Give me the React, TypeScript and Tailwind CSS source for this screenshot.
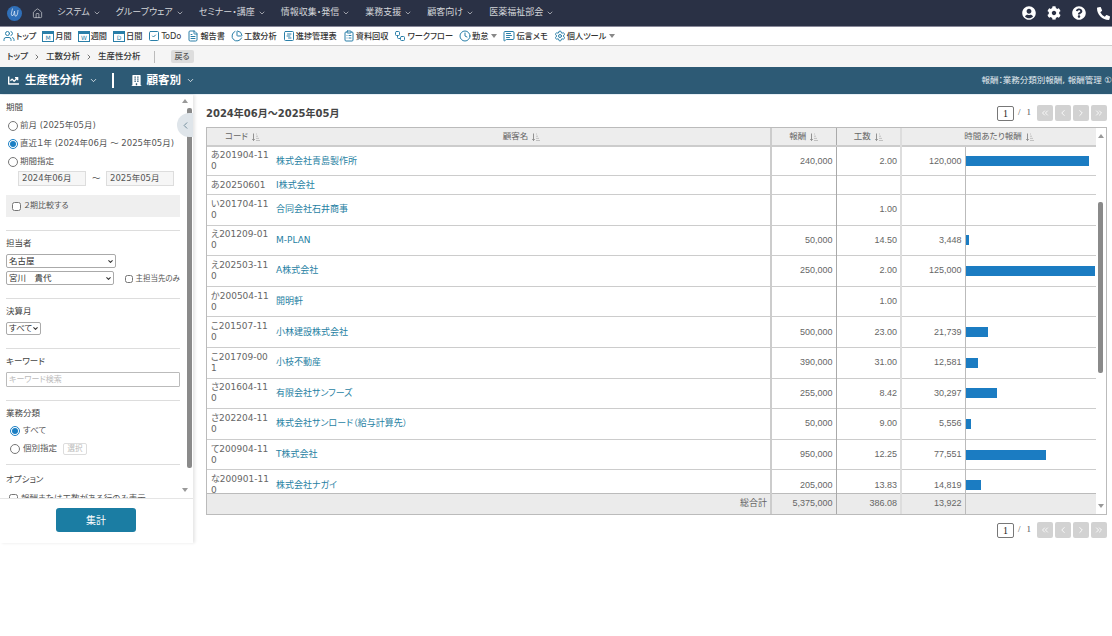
import {
  ChartPie,
  ChevronDown,
  ChevronLeft,
  ChevronRight,
  ChevronsLeft,
  ChevronsRight,
  ClipboardList,
  Clock,
  FileText,
  House,
  MessageSquareText,
  Settings,
  SquareChartGantt,
  SquareCheck,
  Users,
  Workflow,
} from "lucide-react";
import { FaBuilding, FaChartLine, FaCog, FaPhoneAlt, FaQuestionCircle, FaUserCircle } from "react-icons/fa";

const navItems = ["システム", "グループウェア", "セミナー・講座", "情報収集・発信", "業務支援", "顧客向け", "医薬福祉部会"];

const rows = [
  { code: "あ201904-110", name: "株式会社青島製作所", fee: "240,000", hours: "2.00", rate: 120000, h: "h-[28.5px]" },
  { code: "あ20250601", name: "I株式会社", fee: "", hours: "", rate: 0, h: "h-[19px]" },
  { code: "い201704-110", name: "合同会社石井商事", fee: "", hours: "1.00", rate: 0, h: "h-[30.6px]" },
  { code: "え201209-010", name: "M-PLAN", fee: "50,000", hours: "14.50", rate: 3448, h: "h-[30.6px]" },
  { code: "え202503-110", name: "A株式会社", fee: "250,000", hours: "2.00", rate: 125000, h: "h-[30.6px]" },
  { code: "か200504-110", name: "開明軒", fee: "", hours: "1.00", rate: 0, h: "h-[30.6px]" },
  { code: "こ201507-110", name: "小林建設株式会社", fee: "500,000", hours: "23.00", rate: 21739, h: "h-[30.6px]" },
  { code: "こ201709-001", name: "小枝不動産", fee: "390,000", hours: "31.00", rate: 12581, h: "h-[30.6px]" },
  { code: "さ201604-110", name: "有限会社サンフーズ", fee: "255,000", hours: "8.42", rate: 30297, h: "h-[30.6px]" },
  { code: "さ202204-110", name: "株式会社サンロード（給与計算先）", fee: "50,000", hours: "9.00", rate: 5556, h: "h-[30.6px]" },
  { code: "て200904-110", name: "T株式会社", fee: "950,000", hours: "12.25", rate: 77551, h: "h-[30.6px]" },
  { code: "な200901-110", name: "株式会社ナガイ", fee: "205,000", hours: "13.83", rate: 14819, h: "h-[30.6px]" },
];

const Logo = () => (
  <svg width="15" height="15" viewBox="0 0 15 15">
    <circle cx="7.5" cy="7.5" r="7.5" fill="#2f6fb8" />
    <path d="M5.5 2.5 L4.2 8 Q4.5 11 6.5 9 L7.5 5 L8 10 Q9.5 11 10.5 8 L11 4" fill="none" stroke="#e8f0fa" strokeWidth="0.7" />
  </svg>
);

const CalIcon = ({ letter }: { letter: string }) => (
  <svg width="12" height="12" viewBox="0 0 12 12" className="shrink-0">
    <rect x="0.5" y="1.5" width="11" height="10" fill="none" stroke="#2a7fa8" strokeWidth="1" />
    <rect x="0.5" y="1.5" width="11" height="2.5" fill="#2a7fa8" />
    <text x="6" y="10.2" fontSize="6" textAnchor="middle" fill="#2a7fa8">{letter}</text>
  </svg>
);

const Caret = () => <span className="ml-[2px] border-x-[3px] border-t-[4px] border-x-transparent border-t-[#888]" />;

const SortIcon = () => (
  <svg width="8" height="8" viewBox="0 0 8 8" className="ml-1 inline-block shrink-0">
    <path d="M1.5 0.5 V7.5 M0.3 6 L1.5 7.5 L2.7 6" fill="none" stroke="#888" strokeWidth="0.9" />
    <path d="M4 1 H5 M4 3.2 H6 M4 5.4 H7 M4 7.5 H8" fill="none" stroke="#bbb" strokeWidth="0.9" />
  </svg>
);

const ToolItem = ({ icon, label, caret }: { icon: React.ReactNode; label: string; caret?: boolean }) => (
  <div className="flex items-center gap-[1px] whitespace-nowrap">
    {icon}
    <span>{label}</span>
    {caret && <Caret />}
  </div>
);

const Pager = () => {
  const btn = "flex h-[16px] w-[16px] items-center justify-center rounded-[2px] bg-[#d2d2d2] text-white";
  return (
    <div className="flex items-center text-[9px] text-[#555] [font-family:'Liberation_Serif',serif]">
      <div className="flex h-[15px] w-[17px] items-center justify-center rounded-[2px] border border-[#777] bg-white text-[10px] text-[#222]">1</div>
      <span className="ml-[4px]">/</span>
      <span className="ml-[6px] mr-[6px]">1</span>
      <div className="flex gap-[2px]">
        <div className={btn}><ChevronsLeft size={10} /></div>
        <div className={btn}><ChevronLeft size={10} /></div>
        <div className={btn}><ChevronRight size={10} /></div>
        <div className={btn}><ChevronsRight size={10} /></div>
      </div>
    </div>
  );
};

const Cols = () => (
  <colgroup>
    <col className="w-[66px]" />
    <col />
    <col className="w-[65px]" />
    <col className="w-[65px]" />
    <col className="w-[64px]" />
    <col className="w-[131px]" />
  </colgroup>
);

const Hr = ({ top = "mt-[13px]" }: { top?: string }) => <div className={`mb-[6px] h-px bg-[#ddd] ${top}`} />;

const Label = ({ children }: { children: React.ReactNode }) => (
  <div className="mb-[5px] text-[8.5px] leading-[12px] text-[#444]">{children}</div>
);

const FakeSelect = ({ value, className }: { value: string; className: string }) => (
  <div className={`flex items-center justify-between rounded-[2px] border border-[#aaa] bg-white pl-[2px] pr-[1px] text-[8.5px] text-[#333] ${className}`}>
    <span className="whitespace-nowrap">{value}</span>
    <ChevronDown size={7} strokeWidth={3.5} className="shrink-0" />
  </div>
);

export default function App() {
  return (
    <div className="min-h-[636px] bg-white text-[9px] text-[#555] [font-family:'DejaVu_Sans','Noto_Sans_CJK_JP',sans-serif] [font-feature-settings:'palt']">
      {/* Top nav */}
      <nav className="flex h-[26px] items-center bg-[#2a3145] pl-[7px] pr-[2px] text-[#d4d6da]">
        <Logo />
        <House size={11} className="ml-[10px] mr-[14px]" strokeWidth={1.5} />
        <div className="flex items-center gap-[15px]">
          {navItems.map((item) => (
            <div key={item} className="flex items-center gap-[3px] whitespace-nowrap">
              {item}
              <ChevronDown size={8} />
            </div>
          ))}
        </div>
        <div className="ml-auto flex items-center gap-[11px] text-white">
          <FaUserCircle size={14} />
          <FaCog size={14} />
          <FaQuestionCircle size={14} />
          <FaPhoneAlt size={13} />
        </div>
      </nav>

      {/* Toolbar */}
      <div className="flex h-[20px] items-center gap-[6px] border-y border-y-[#ccc] border-t-[#889] bg-white pl-[3px] text-[8.2px] font-medium text-[#333]">
        <ToolItem icon={<Users size={12} className="text-[#2a7fa8]" />} label="トップ" />
        <ToolItem icon={<CalIcon letter="M" />} label="月間" />
        <ToolItem icon={<CalIcon letter="W" />} label="週間" />
        <ToolItem icon={<CalIcon letter="D" />} label="日間" />
        <ToolItem icon={<SquareCheck size={12} className="text-[#2a7fa8]" />} label="ToDo" />
        <ToolItem icon={<FileText size={12} className="text-[#2a7fa8]" />} label="報告書" />
        <ToolItem icon={<ChartPie size={12} className="text-[#2a7fa8]" />} label="工数分析" />
        <ToolItem icon={<SquareChartGantt size={12} className="text-[#2a7fa8]" />} label="進捗管理表" />
        <ToolItem icon={<ClipboardList size={12} className="text-[#2a7fa8]" />} label="資料回収" />
        <ToolItem icon={<Workflow size={12} className="text-[#2a7fa8]" />} label="ワークフロー" />
        <ToolItem icon={<Clock size={12} className="text-[#2a7fa8]" />} label="勤怠" caret />
        <ToolItem icon={<MessageSquareText size={12} className="text-[#2a7fa8]" />} label="伝言メモ" />
        <ToolItem icon={<Settings size={12} className="text-[#2a7fa8]" />} label="個人ツール" caret />
      </div>

      {/* Breadcrumb */}
      <div className="flex h-[21px] items-center bg-[#f5f5f5] pl-[7px] text-[8.5px] font-medium text-[#333]">
        <span>トップ</span>
        <ChevronRight size={8} className="mx-[5px]" />
        <span>工数分析</span>
        <ChevronRight size={8} className="mx-[5px]" />
        <span>生産性分析</span>
        <span className="ml-[13px] h-[12px] w-px bg-[#bbb]" />
        <span className="ml-[16px] flex h-[13px] w-[23px] items-center justify-center rounded-[2px] bg-[#ddd] text-[8px] text-[#555]">戻る</span>
      </div>

      {/* Title bar */}
      <div className="flex h-[28px] items-center border-b border-b-[#e8f0f6] bg-[#2d5a75] pl-[8px] text-white">
        <FaChartLine size={11} />
        <span className="ml-[6px] text-[11.5px] font-bold">生産性分析</span>
        <ChevronDown size={9} className="ml-[6px]" />
        <span className="ml-[14px] h-[15px] w-[2px] bg-white" />
        <FaBuilding size={11} className="ml-[17px]" />
        <span className="ml-[5px] text-[11.5px] font-bold">顧客別</span>
        <ChevronDown size={9} className="ml-[5px]" />
        <div className="ml-auto whitespace-nowrap text-[8.5px] text-[#e4ebf0]">報酬：業務分類別報酬, 報酬管理 ①</div>
      </div>

      <div className="flex h-[448px]">
        {/* Sidebar */}
        <aside className="relative flex w-[193px] shrink-0 flex-col shadow-[2px_0_3px_rgba(0,0,0,0.1)]">
          <div className="h-[403px] overflow-hidden py-[6px] pl-[6px] pr-[13px]">
            <Label>期間</Label>
            <div className="mt-[6px] flex flex-col gap-[5px] pl-[2px] text-[8.5px] leading-[13px] whitespace-nowrap">
              <label className="flex items-center gap-[2px]">
                <input type="radio" name="period" className="m-0 h-[10px] w-[10px]" />
                前月 (2025年05月)
              </label>
              <label className="flex items-center gap-[2px]">
                <input type="radio" name="period" defaultChecked className="m-0 h-[10px] w-[10px] accent-[#1b7fc4]" />
                直近１年 (2024年06月 ～ 2025年05月)
              </label>
              <label className="flex items-center gap-[2px]">
                <input type="radio" name="period" className="m-0 h-[10px] w-[10px]" />
                期間指定
              </label>
            </div>
            <div className="mt-[3px] flex items-center pl-[12px] text-[8.5px]">
              <div className="flex h-[15px] w-[68px] items-center border border-[#ddd] bg-[#f6f6f6] pl-[3px]">2024年06月</div>
              <span className="mx-[6px] w-[8px] text-center">～</span>
              <div className="flex h-[15px] w-[68px] items-center border border-[#ddd] bg-[#f6f6f6] pl-[3px]">2025年05月</div>
            </div>
            <div className="mt-[9px] flex h-[22px] items-center gap-[3px] bg-[#efefef] pl-[6px] text-[8px]">
              <input type="checkbox" className="m-0 h-[9px] w-[9px]" />
              ２期比較する
            </div>
            <Hr />
            <Label>担当者</Label>
            <FakeSelect value="名古屋" className="h-[14px] w-[110px]" />
            <div className="mt-[3px] flex items-center">
              <FakeSelect value="宮川　貴代" className="h-[14px] w-[110px]" />
              <label className="ml-[11px] mt-[2px] flex items-center gap-[2px] whitespace-nowrap text-[7.5px]">
                <input type="checkbox" className="m-0 h-[8px] w-[8px]" />
                主担当先のみ
              </label>
            </div>
            <Hr />
            <Label>決算月</Label>
            <FakeSelect value="すべて" className="h-[13px] w-[35px]" />
            <Hr />
            <Label>キーワード</Label>
            <div className="mt-[1px] flex h-[15px] items-center rounded-[1px] border border-[#bbb] bg-white pl-[2px] text-[8px] text-[#bbb]">キーワード検索</div>
            <Hr />
            <Label>業務分類</Label>
            <div className="flex flex-col gap-[5px] pl-[4px] text-[8.5px] leading-[13px]">
              <label className="flex items-center gap-[3px]">
                <input type="radio" name="kind" defaultChecked className="m-0 h-[10px] w-[10px] accent-[#1b7fc4]" />
                すべて
              </label>
              <label className="flex items-center gap-[3px]">
                <input type="radio" name="kind" className="m-0 h-[10px] w-[10px]" />
                個別指定
                <span className="ml-[3px] flex h-[12px] w-[24px] items-center justify-center rounded-[2px] border border-[#ddd] text-[7.5px] text-[#bbb]">選択</span>
              </label>
            </div>
            <Hr top="mt-[9px]" />
            <div className="pt-[2px]">
              <Label>オプション</Label>
            </div>
            <label className="flex items-center gap-[3px] pl-[3px] pt-[2px] text-[8.5px] whitespace-nowrap">
              <input type="checkbox" className="m-0 h-[9px] w-[9px]" />
              報酬または工数がある行のみ表示
            </label>
          </div>
          <div className="flex flex-1 items-center justify-center border-t border-t-[#e5e5e5] bg-white pb-[2px] pr-[1px]">
            <button className="h-[24px] w-[80px] rounded-[3px] bg-[#1b7da3] text-[10px] text-white">集計</button>
          </div>
          {/* sidebar scrollbar */}
          <div className="absolute right-[5px] top-[4px] h-0 w-0 border-x-[3px] border-b-[4px] border-x-transparent border-b-[#999]" />
          <div className="absolute right-[1px] top-[13px] h-[360px] w-[5px] rounded-[2px] bg-[#8a8a8a]" />
          <div className="absolute right-[5px] top-[393px] h-0 w-0 border-x-[3px] border-t-[4px] border-x-transparent border-t-[#999]" />
          <div className="absolute right-0 top-[18px] flex h-[24px] w-[16px] items-center justify-center rounded-l-full bg-[#dfe5ea] text-[#6a8696]">
            <ChevronLeft size={11} />
          </div>
        </aside>

        {/* Main */}
        <main className="min-w-0 flex-1 pl-[13px] pr-[5px] pt-[10px]">
          <div className="flex h-[16px] items-center justify-between">
            <div className="text-[10px] font-bold text-[#444]">2024年06月～2025年05月</div>
            <Pager />
          </div>
          <div className="relative mt-[6px] flex h-[388px] flex-col overflow-hidden border border-[#bbb]">
            <div className="pr-[10px]">
              <table className="w-full table-fixed border-collapse text-[8.5px] text-[#666]">
                <Cols />
                <thead>
                  <tr className="h-[18px] border-b-2 border-b-[#ccc] bg-[#ededed]">
                    <th className="font-normal"><span className="flex items-center justify-center pl-[5px]">コード<SortIcon /></span></th>
                    <th className="font-normal"><span className="flex items-center justify-center">顧客名<SortIcon /></span></th>
                    <th className="border-l-2 border-l-[#ccc] font-normal"><span className="flex items-center justify-center">報酬<SortIcon /></span></th>
                    <th className="border-l border-l-[#aaa] font-normal"><span className="flex items-center justify-center">工数<SortIcon /></span></th>
                    <th colSpan={2} className="border-l-2 border-l-[#ddd] font-normal"><span className="flex items-center justify-center">時間あたり報酬<SortIcon /></span></th>
                  </tr>
                </thead>
              </table>
            </div>
            <div className="min-h-0 flex-1 overflow-hidden pr-[10px]">
              <table className="w-full table-fixed border-collapse text-[9px] leading-[11px] text-[#666]">
                <Cols />
                <tbody>
                  {rows.map((r) => (
                    <tr key={r.code} className={`${r.h} border-b border-b-[#ccc]`}>
                      <td className="break-all pl-[4px]">{r.code}</td>
                      <td className="pl-[3px] text-[#1f7fa3]">{r.name}</td>
                      <td className="border-l-2 border-l-[#ccc] pr-[3px] text-right [font-family:'Liberation_Sans',sans-serif]">{r.fee}</td>
                      <td className="border-l border-l-[#aaa] pr-[3px] text-right [font-family:'Liberation_Sans',sans-serif]">{r.hours}</td>
                      <td className="border-l-2 border-l-[#ddd] pr-[3px] text-right [font-family:'Liberation_Sans',sans-serif]">{r.rate ? r.rate.toLocaleString("en-US") : ""}</td>
                      <td className="border-l border-l-[#bbb]">
                        {r.rate > 0 && (
                          <div className="h-[10px] bg-[#1b7cc2]" style={{ width: `${Math.max((r.rate / 125000) * 129, 3)}px` }} />
                        )}
                      </td>
                    </tr>
                  ))}
                </tbody>
              </table>
            </div>
            <table className="w-[calc(100%-10px)] table-fixed border-collapse bg-[#ebebeb] text-[9px] text-[#666]">
              <Cols />
              <tbody>
                <tr className="h-[21px] border-t border-t-[#bbb]">
                  <td colSpan={2} className="pr-[3px] text-right">総合計</td>
                  <td className="border-l-2 border-l-[#ccc] pr-[3px] text-right [font-family:'Liberation_Sans',sans-serif]">5,375,000</td>
                  <td className="border-l border-l-[#aaa] pr-[3px] text-right [font-family:'Liberation_Sans',sans-serif]">386.08</td>
                  <td className="border-l-2 border-l-[#ddd] pr-[3px] text-right [font-family:'Liberation_Sans',sans-serif]">13,922</td>
                  <td className="border-l border-l-[#bbb]" />
                </tr>
              </tbody>
            </table>
            {/* table scrollbar */}
            <div className="absolute right-0 top-0 h-full w-[10px] bg-white">
              <div className="absolute left-[2px] top-[6px] h-0 w-0 border-x-[3px] border-b-[4px] border-x-transparent border-b-[#999]" />
              <div className="absolute left-[2px] top-[74px] h-[171px] w-[5px] rounded-[2px] bg-[#8a8a8a]" />
              <div className="absolute bottom-[6px] left-[2px] h-0 w-0 border-x-[3px] border-t-[4px] border-x-transparent border-t-[#999]" />
            </div>
          </div>
          <div className="mt-[7px] flex justify-end">
            <Pager />
          </div>
        </main>
      </div>
    </div>
  );
}
